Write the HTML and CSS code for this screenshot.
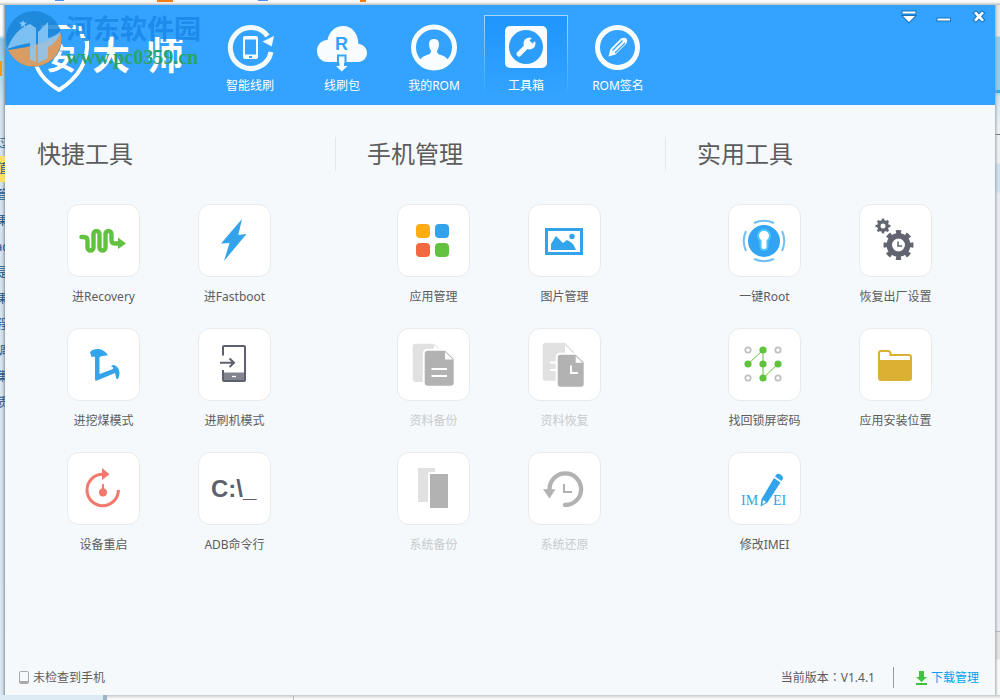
FILE: index.html
```html
<!DOCTYPE html>
<html lang="zh-CN">
<head>
<meta charset="utf-8">
<title>安大师 - 工具箱</title>
<link rel="stylesheet" href="styles.css">
</head>
<body>
<div class="desktop">
  <div class="strip strip-top"></div>
  <div class="strip strip-left" aria-hidden="true">
    <span>过</span><span class="hot">值</span><span>管</span><span>果</span><span>ad</span><span>是</span><span>果</span><span>程</span><span>调</span><span>集</span><span>质</span>
  </div>
  <div class="window">
    <header class="header">
      <div class="brand">
        <svg class="brand-logo" width="203" height="100" viewBox="5 5 203 100" role="img" aria-label="安大师">
          <path d="M41 27H74L80 28L82 34Q82 39 87 41Q89 71 59 90Q37 77 34 57" fill="none" stroke="#fff" stroke-width="4" stroke-linejoin="round"/>
          <text x="46" y="69" class="logo-small">安</text>
          <text x="92" y="69" class="logo-big">大</text>
          <text x="146" y="69" class="logo-big">师</text>
        </svg>
        <div class="watermark">
          <svg width="58" height="58" viewBox="0 0 58 58">
            <circle cx="29" cy="29" r="28" fill="#1c86d6" opacity=".85"/>
            <path d="M56 23A28 28 0 0 1 3 40Q38 36 56 23Z" fill="#d99c62"/>
            <path d="M2 39Q10 19 25 14V33Q12 35 2 39ZM25 14L31 18V52L25 50ZM33 22L43 12V28Q49 27 56 21Q52 33 43 37V48L33 53Z" fill="#8cc8f7" opacity=".85"/>
            <path d="M18 10l1 2.500h3l-2.500 2 1 3-2.500-2-2.500 2 1-3-2.500-2h3z" fill="#8cc8f7"/>
          </svg>
          <p class="watermark-text"><span class="site">河东软件园</span><span class="url">www.pc0359.cn</span></p>
        </div>
      </div>
      <nav class="nav">
        <a class="nav-item" href="#flash">
          <svg viewBox="0 0 46 46"><path d="M44 28A20.500 20.500 0 1 1 40.500 12" fill="none" stroke="#f4fbff" stroke-width="5"/><path d="M35.500 17.500L47 12L44.700 22.500Z" fill="#f4fbff"/><rect x="16" y="12" width="15" height="23" rx="2" fill="#f4fbff"/><path d="M18 15.500h11v15H18zM22 32h3v2h-3z" fill="#33a3ff"/></svg>
          <span>智能线刷</span></a>
        <a class="nav-item" href="#package">
          <svg viewBox="0 0 46 46"><path d="M9 38C2 38 -2 33 -2 27C-2 21 2 16 8.500 16C10 8 16 2 24 2C33 2 39 9 39.500 20C44 20 48 24 48 29C48 34 44 38 39 38Z" fill="#f8fcff"/><text x="16" y="26" class="cloud-r">R</text><path d="M19 39V31.500H26.500V39" fill="#f8fcff" stroke="#33a3ff" stroke-width="2"/><path d="M20.500 33H25V42H28.500L22.700 47.500L17 42H20.500Z" fill="#f8fcff"/></svg>
          <span>线刷包</span></a>
        <a class="nav-item" href="#rom">
          <svg viewBox="0 0 46 46"><circle cx="23" cy="23.500" r="20.500" fill="none" stroke="#fafdff" stroke-width="5"/><path d="M8 39Q9 33 16 31Q20 30 20 27Q18 24 18 20Q18 15 23 15Q28 15 28 20Q28 24 26 27Q26 30 30 31Q37 33 38 39Q23 50 8 39Z" fill="#fafdff"/></svg>
          <span>我的ROM</span></a>
        <a class="nav-item active" href="#tools" aria-current="page">
          <svg viewBox="0 0 46 46"><rect x="2" y="2" width="42" height="42" rx="5" fill="#f8fcff"/><circle cx="23" cy="23" r="17" fill="#2c9dfa"/><path d="M16 30L26 20" stroke="#f8fcff" stroke-width="5" stroke-linecap="round"/><circle cx="26.500" cy="19.500" r="6" fill="#f8fcff"/><path d="M28 18L32 14" stroke="#2c9dfa" stroke-width="4.500"/></svg>
          <span>工具箱</span></a>
        <a class="nav-item" href="#sign">
          <svg viewBox="0 0 46 46"><circle cx="22.500" cy="23.500" r="20" fill="none" stroke="#fafdff" stroke-width="5"/><path d="M13.500 32.500L15.500 25L26 14.500Q29 13 31.500 14.500Q33 17 31 20L20.500 30.500Z" fill="#fafdff"/><path d="M17.500 26.500L27.500 16.500M20 29L30 19" stroke="#33a3ff" stroke-width="1.300"/></svg>
          <span>ROM签名</span></a>
      </nav>
      <div class="controls">
        <button type="button" aria-label="菜单"><svg viewBox="0 0 14 14"><path d="M.5 1.500H13.500V3.500H.5zM1 6H13L7 12Z"/></svg></button>
        <button type="button" aria-label="最小化"><svg viewBox="0 0 14 14"><path d="M.5 8.500H13V10.500H.5z"/></svg></button>
        <button type="button" aria-label="关闭"><svg viewBox="0 0 14 14"><path d="M2 3L4 1.500L7 4.500L10 1.500L12 3L9 6.500L12 10L10 11.500L7 8.500L4 11.500L2 10L5 6.500Z"/></svg></button>
      </div>
    </header>
    <main class="groups">
      <section class="group">
        <h2>快捷工具</h2>
        <div class="tools">
          <button class="tool" type="button"><span class="tile"><svg viewBox="1 1 71 71"><path d="M14.500 33H17Q20.500 33 20.500 37V43.500a3 3 0 0 0 6 0V30a3 3 0 0 1 6 0V43.500a3 3 0 0 0 6 0V30a3 3 0 0 1 6 0V36q0 3.500 3 3.500h5" fill="none" stroke="#62c23f" stroke-width="4.400" stroke-linecap="round"/><path d="M51 33.500L59 39.500L51 45Z" fill="#62c23f"/></svg></span><span>进Recovery</span></button>
          <button class="tool" type="button"><span class="tile"><svg viewBox="1 1 71 71"><path d="M44 15L23 39.500L31.500 39L26 57L48.500 30L40.300 31Z" fill="#33a3eb"/></svg></span><span>进Fastboot</span></button>
          <button class="tool" type="button"><span class="tile"><svg viewBox="1 1 71 71"><path d="M23 24Q26 20.500 32 21Q38 22 41 27.500Q36 27 32.500 29V46L46 41Q47 39 44 38.500Q47 35 51 40Q54 44 51 51H49.500L48 45L30 52.500H28V29Q27 28 24.500 29Z" fill="#33a3eb"/></svg></span><span>进挖煤模式</span></button>
          <button class="tool" type="button"><span class="tile"><svg viewBox="1 1 71 71"><path d="M25 44.500H47V53H25z" fill="#83858e"/><path d="M25 27.500V19Q25 18 26 18H46Q47 18 47 19V52Q47 53 46 53H26Q25 53 25 52V42M22 34.700H35.500M31.500 30.500L36 34.700L31.500 39" fill="none" stroke="#5d606e" stroke-width="2"/><path d="M34 48.500h4" stroke="#fff" stroke-width="1.300"/></svg></span><span>进刷机模式</span></button>
          <button class="tool" type="button"><span class="tile"><svg viewBox="1 1 71 71"><path d="M51.400 38A15.700 15.700 0 1 1 35.700 22.300" fill="none" stroke="#f0786c" stroke-width="3"/><path d="M35 16L42.500 22.300L35 28Z" fill="#f0786c"/><circle cx="36" cy="40.500" r="4" fill="#f0786c"/><path d="M35.200 32h1.600l.7 7h-3z" fill="#f0786c"/></svg></span><span>设备重启</span></button>
          <button class="tool" type="button"><span class="tile"><svg viewBox="0 0 71 71"><text x="12" y="44" class="prompt">C:\_</text></svg></span><span>ADB命令行</span></button>
        </div>
      </section>
      <section class="group">
        <h2>手机管理</h2>
        <div class="tools">
          <button class="tool" type="button"><span class="tile"><svg viewBox="0 0 71 71"><rect x="18" y="19" width="14" height="14" rx="4" fill="#ffae12"/><rect x="37" y="19" width="14" height="14" rx="4" fill="#33a3eb"/><rect x="18" y="38" width="14" height="14" rx="4" fill="#f26840"/><rect x="37" y="38" width="14" height="14" rx="4" fill="#62c23f"/></svg></span><span>应用管理</span></button>
          <button class="tool" type="button"><span class="tile"><svg viewBox="0 0 71 71"><rect x="17.500" y="24.500" width="35" height="24" fill="none" stroke="#33a3eb" stroke-width="3"/><path d="M22 45V39L27 31L34 38L38 35Q44 37 47 45Z" fill="#33a3eb"/><circle cx="43" cy="31.500" r="2.700" fill="#33a3eb"/></svg></span><span>图片管理</span></button>
          <button class="tool" type="button" disabled><span class="tile"><svg viewBox="1 1 71 71"><path d="M19 15.700H37L43 22V54H19Q15.700 54 15.700 51V19Q15.700 15.700 19 15.700Z" fill="#e1e1e1"/><path d="M37 17v5h5" fill="#fff"/><path d="M31 22.700H48L56.700 31V54.500Q56.700 57.700 53.500 57.700H31Q27.700 57.700 27.700 54.500V26Q27.700 22.700 31 22.700Z" fill="#b2b2b2" stroke="#fff" stroke-width="4" paint-order="stroke"/><path d="M48 24V31.500H56z" fill="#fff"/><path d="M34.500 41H50M34.500 48H50" stroke="#fff" stroke-width="2"/></svg></span><span>资料备份</span></button>
          <button class="tool" type="button" disabled><span class="tile"><svg viewBox="1 1 71 71"><path d="M18 14.700H37L47 25V52.700H18Q14.700 52.700 14.700 49.500V18Q14.700 14.700 18 14.700Z" fill="#e1e1e1"/><path d="M37 17v8h8zM22 33.500h8v2h-8zM22 41h8v2h-8z" fill="#fff"/><path d="M32.500 26.700H47.700L55.700 34.500V56Q55.700 58.700 53 58.700H32.500Q29.700 58.700 29.700 56V29.500Q29.700 26.700 32.500 26.700Z" fill="#b2b2b2" stroke="#fff" stroke-width="4" paint-order="stroke"/><path d="M47.700 28V34.700H54.500z" fill="#fff"/><path d="M43 37.500V45H50" fill="none" stroke="#fff" stroke-width="2"/></svg></span><span>资料恢复</span></button>
          <button class="tool" type="button" disabled><span class="tile"><svg viewBox="0 0 71 71"><path d="M20 15H37V49H20z" fill="#e1e1e1"/><path d="M30 19H50V55H30z" fill="#fff"/><path d="M32 21H50V55H32z" fill="#b2b2b2"/></svg></span><span>系统备份</span></button>
          <button class="tool" type="button" disabled><span class="tile"><svg viewBox="0 0 71 71"><path d="M20.500 38V36.200A15.800 15.800 0 1 1 36 52" fill="none" stroke="#b2b2b2" stroke-width="4.300" stroke-linecap="round"/><path d="M14 36.200H26.500L20.500 45.500Z" fill="#b2b2b2"/><path d="M35 31V39H43" fill="none" stroke="#b2b2b2" stroke-width="2"/></svg></span><span>系统还原</span></button>
        </div>
      </section>
      <section class="group">
        <h2>实用工具</h2>
        <div class="tools">
          <button class="tool" type="button"><span class="tile"><svg viewBox="0 0 71 71"><circle cx="35" cy="36" r="16" fill="#33a3f3"/><path d="M25 18Q35 13.500 45 18M25 54Q35 58.500 45 54M17 26Q12.500 36 17 46M53 26Q57.500 36 53 46" fill="none" stroke="#70bff5" stroke-width="2"/><path d="M32.500 35A5 5 0 1 1 37.500 35V41.500a2.500 2.500 0 0 1-5 0Z" fill="#fff" stroke="#4cc6ff" stroke-width="4" paint-order="stroke"/></svg></span><span>一键Root</span></button>
          <button class="tool" type="button"><span class="tile"><svg viewBox="1 1 71 71"><g fill="none" stroke="#62656f"><circle cx="24" cy="22" r="4.200" stroke-width="3.400"/><circle cx="24" cy="22" r="6.200" stroke-width="2.600" pathLength="16" stroke-dasharray="1" stroke-dashoffset=".5"/><circle cx="39.500" cy="41" r="9.200" stroke-width="5.500"/><circle cx="39.500" cy="41" r="13" stroke-width="4" pathLength="16" stroke-dasharray="1" stroke-dashoffset=".5"/><path d="M39 37.500V42H43" stroke-width="1.500"/></g></svg></span><span>恢复出厂设置</span></button>
          <button class="tool" type="button"><span class="tile"><svg viewBox="1 1 71 71"><path d="M20 36L35 22V50L50 36" fill="none" stroke="#62c23f"/><g fill="#62c23f"><circle cx="35" cy="22" r="3.600"/><circle cx="20" cy="36" r="3.600"/><circle cx="35" cy="36" r="3.600"/><circle cx="50" cy="36" r="3.600"/><circle cx="35" cy="50" r="3.600"/></g><g fill="#fff" stroke="#bfbfbf" stroke-width="1.700"><circle cx="20" cy="22" r="2.700"/><circle cx="50" cy="22" r="2.700"/><circle cx="20" cy="50" r="2.700"/><circle cx="50" cy="50" r="2.700"/></g></svg></span><span>找回锁屏密码</span></button>
          <button class="tool" type="button"><span class="tile"><svg viewBox="0 0 71 71"><path d="M19 31V24Q19 22 21 22H28Q30 22 30.500 24.500V26H49Q51 26 51 28V31" fill="none" stroke="#dab132" stroke-width="2"/><path d="M18 31H52V49Q52 52 49 52H21Q18 52 18 49Z" fill="#dab132"/></svg></span><span>应用安装位置</span></button>
          <button class="tool" type="button"><span class="tile"><svg viewBox="0 0 71 71"><g class="imei"><text x="12" y="52">IM</text><text x="44" y="52">EI</text></g><path d="M31.500 53.500L32.500 46L45 25L51.500 29.500L38.500 49.500ZM46 23.500L47.500 21.500Q49 20 51.500 21.500Q54.500 23.500 54 25.500L52.500 28Z" fill="#33a3eb"/><path d="M34 47L37 49L33.500 51.500Z" fill="#fff"/></svg></span><span>修改IMEI</span></button>
        </div>
      </section>
    </main>
    <footer class="footer">
      <span class="phone-icon"></span>
      <span>未检查到手机</span>
      <span class="version">当前版本<span class="colon" lang="zh-TW">：</span>V1.4.1</span>
      <a class="download" href="#downloads"><svg width="11" height="14" viewBox="0 0 11 14"><path d="M3 0H8V6H11L5.500 11L0 6H3ZM0 12H11V14H0z" fill="#3fc23f"/></svg>下载管理</a>
    </footer>
  </div>
  <div class="strip strip-right"></div>
  <div class="strip strip-bottom"></div>
</div>
</body>
</html>
```

FILE: styles.css
```css
* {
  box-sizing: border-box;
}

body {
  margin: 0;
  font: 12px/20px "Noto Sans", "Noto Sans CJK SC", sans-serif;
  color: #5c5c5c;
}

button {
  margin: 0;
  padding: 0;
  border: 0;
  background: none;
  font: inherit;
  color: inherit;
}

a {
  color: inherit;
  text-decoration: none;
}

h2,
p {
  margin: 0;
  font-weight: 400;
}

.desktop {
  display: grid;
  grid-template-columns: 5px 1fr 5px;
  grid-template-rows: 5px 1fr 5px;
  min-height: 100vh;
}

.strip {
  overflow: hidden;
}

.strip-top {
  grid-column: 1 / -1;
  background:
    linear-gradient(#4d8ff5, #4d8ff5) 55px 0 / 9px 1px no-repeat,
    linear-gradient(#f57d0d, #f57d0d) 157px 0 / 16px 2px no-repeat,
    linear-gradient(#4d8ff5, #4d8ff5) 258px 0 / 10px 1px no-repeat,
    linear-gradient(#f57d0d, #f57d0d) 360px 0 / 6px 2px no-repeat,
    linear-gradient(#fafafa 40%, #bdbdbd);
}

.strip-left {
  display: flex;
  flex-direction: column;
  align-items: center;
  padding-top: 125px;
  color: #24558a;
  background:
    linear-gradient(#f59a12, #f59a12) 0 56px / 2px 15px no-repeat,
    linear-gradient(#fff 30px, #8cc9e8 34px, #c3e3f2 88px, #d5e4ef 100px, #dbe7f1);
  box-shadow: inset -3px 0 3px -2px #7d8a94;
}

.strip-left span {
  flex: none;
  line-height: 26px;
  white-space: nowrap;
}

.strip-left .hot {
  background: #fbdc6c;
}

.strip-right {
  background:
    linear-gradient(#33a3eb, #33a3eb) 0 85px / 5px 3px no-repeat,
    linear-gradient(#777, #777) 0 129px / 5px 1px no-repeat,
    linear-gradient(#b9b9b9, #b9b9b9) 0 626px / 5px 1px no-repeat,
    linear-gradient(#e9e9e9 31px, #8fcdee 32px, #8fcdee 85px, #d5e6f3 92px, #eef1f5 122px, #efefef 158px, #cfe2f0 159px, #cfe2f0 185px, #e9edf3 190px, #e9edf3 626px, #e5e5e5 627px, #e5e5e5 654px, #fafafa 655px);
  box-shadow: inset 3px 0 3px -2px #9aa4ac;
}

.strip-bottom {
  grid-column: 1 / -1;
  background:
    linear-gradient(#9db2c4, #9db2c4) 103px 0 / 4px 5px no-repeat,
    linear-gradient(#bbb, #bbb) 293px 0 / 1px 5px no-repeat,
    linear-gradient(90deg, #dceaf4 103px, transparent 104px),
    linear-gradient(#c5c9cc, #f8f8f8 70%);
}

.window {
  display: flex;
  flex-direction: column;
  min-width: 0;
  background: #f5f9fc;
}

.header {
  display: flex;
  height: 100px;
  color: #fff;
  background: #33a3ff;
}

.brand {
  position: relative;
  flex: none;
  width: 203px;
}

.brand-logo {
  display: block;
}

.logo-small,
.logo-big {
  fill: #fff;
  font-family: "Noto Sans CJK SC", sans-serif;
  font-weight: 700;
}

.logo-small {
  font-size: 30px;
}

.logo-big {
  font-size: 38px;
}

.watermark {
  position: absolute;
  top: 5px;
  left: 0;
  display: flex;
  gap: 3px;
}

.watermark-text {
  display: flex;
  flex-direction: column;
  white-space: nowrap;
}

.site {
  font: 700 27px/36px "Noto Sans CJK SC", sans-serif;
  color: #1a87e8;
  opacity: 0.85;
}

.url {
  font: 700 20px/22px "Liberation Serif", serif;
  color: #27a36b;
}

.nav {
  display: flex;
  gap: 8px;
  padding-top: 10px;
}

.nav-item {
  display: flex;
  flex-direction: column;
  align-items: center;
  gap: 8px;
  width: 84px;
  height: 80px;
  padding-top: 8px;
  border: 1px solid transparent;
  border-bottom: 0;
  line-height: 16px;
  white-space: nowrap;
}

.nav-item svg {
  width: 46px;
  height: 46px;
  overflow: visible;
}

.nav-item.active {
  background: linear-gradient(#1e96fc, #33a3ff);
  border-image: linear-gradient(#a4d7ff, #33a3ff) 1;
}

.cloud-r {
  fill: #33a3ff;
  font: 700 18px "Liberation Sans", sans-serif;
}

.controls {
  display: flex;
  gap: 7px;
  margin-left: auto;
  padding-right: 2px;
}

.controls button {
  display: flex;
  align-items: center;
  justify-content: center;
  width: 28px;
  height: 24px;
}

.controls svg {
  width: 14px;
  height: 14px;
  overflow: visible;
  fill: #fff;
  stroke: #1773bd;
  stroke-width: 2;
  paint-order: stroke;
}

.groups {
  flex: 1;
  display: grid;
  grid-template-columns: repeat(3, 1fr);
  align-items: start;
  padding-top: 32px;
}

.group h2 {
  padding-left: 32px;
  font-size: 24px;
  line-height: 34px;
}

.group + .group h2 {
  padding-left: 31px;
  border-left: 1px solid #e3e8ec;
}

.tools {
  display: grid;
  grid-template-columns: 1fr 1fr;
  row-gap: 21px;
  padding: 33px 35px 0 33px;
}

.group:last-child .tools {
  padding-right: 34px;
  padding-left: 34px;
}

.tool {
  display: flex;
  flex-direction: column;
  align-items: center;
  gap: 10px;
  white-space: nowrap;
}

.tool:disabled {
  color: #c8cacc;
}

.tile {
  width: 73px;
  height: 73px;
  border: 1px solid #e9eaec;
  border-radius: 12px;
  background: #fff;
}

.tile svg {
  display: block;
  width: 71px;
  height: 71px;
}

.prompt {
  fill: #5d606e;
  font: 700 24px "Liberation Sans", sans-serif;
}

.imei {
  fill: #33a3eb;
  font: 14px "Liberation Serif", serif;
}

.footer {
  display: flex;
  align-items: center;
  gap: 4px;
  padding: 0 16px 7px 14px;
}

.phone-icon {
  width: 10px;
  height: 13px;
  border: 1px solid #aaa;
  border-bottom-width: 3px;
  border-radius: 2px;
}

.version {
  margin-left: auto;
  padding-right: 18px;
  border-right: 1px solid #999;
}

.colon {
  font-family: "Noto Sans CJK TC", sans-serif;
}

.download {
  display: flex;
  align-items: center;
  gap: 4px;
  margin-left: 18px;
  color: #00a2f0;
}
```
